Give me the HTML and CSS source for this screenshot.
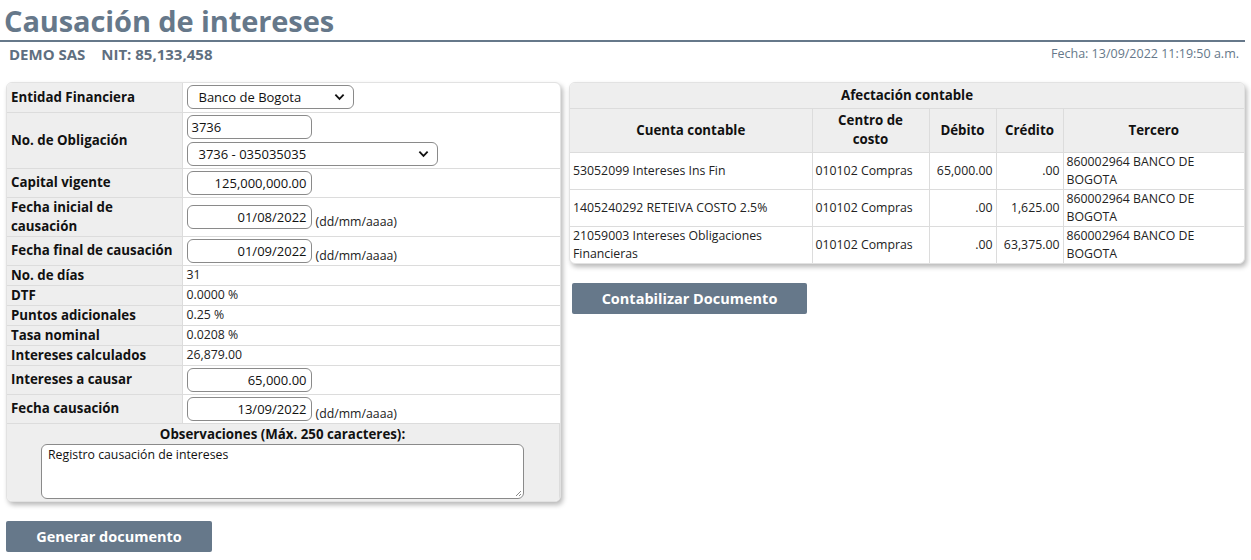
FILE: index.html
```html
<!DOCTYPE html>
<html lang="es">
<head>
<meta charset="utf-8">
<title>Causación de intereses</title>
<link rel="stylesheet" href="styles.css">
</head>
<body>
<header class="page-head">
  <h1 class="title">Causación de intereses</h1>
  <div class="subhead">
    <div class="company">DEMO SAS <span class="nit">NIT: 85,133,458</span></div>
    <div class="date">Fecha: 13/09/2022 11:19:50 a.m.</div>
  </div>
</header>

<main class="content">
  <section class="left">
    <div class="panel form-panel">
      <table class="form-table">
        <tr class="r-entidad">
          <th>Entidad Financiera</th>
          <td><div class="select w-bank"><span>Banco de Bogota</span><svg viewBox="0 0 12 8" class="chev"><path d="M1.5 1.5 6 6l4.5-4.5" /></svg></div></td>
        </tr>
        <tr class="r-oblig">
          <th>No. de Obligación</th>
          <td>
            <div class="input w-short left-al">3736</div>
            <div class="select w-long"><span>3736 - 035035035</span><svg viewBox="0 0 12 8" class="chev"><path d="M1.5 1.5 6 6l4.5-4.5" /></svg></div>
          </td>
        </tr>
        <tr class="r-input">
          <th>Capital vigente</th>
          <td><div class="input w-short">125,000,000.00</div></td>
        </tr>
        <tr class="r-date2">
          <th>Fecha inicial de causación</th>
          <td><div class="date-field"><div class="input w-short">01/08/2022</div><span class="hint">(dd/mm/aaaa)</span></div></td>
        </tr>
        <tr class="r-input">
          <th>Fecha final de causación</th>
          <td><div class="date-field"><div class="input w-short">01/09/2022</div><span class="hint">(dd/mm/aaaa)</span></div></td>
        </tr>
        <tr class="r-text"><th>No. de días</th><td>31</td></tr>
        <tr class="r-text"><th>DTF</th><td>0.0000 %</td></tr>
        <tr class="r-text"><th>Puntos adicionales</th><td>0.25 %</td></tr>
        <tr class="r-text"><th>Tasa nominal</th><td>0.0208 %</td></tr>
        <tr class="r-text"><th>Intereses calculados</th><td>26,879.00</td></tr>
        <tr class="r-input">
          <th>Intereses a causar</th>
          <td><div class="input w-short">65,000.00</div></td>
        </tr>
        <tr class="r-input">
          <th>Fecha causación</th>
          <td><div class="date-field"><div class="input w-short">13/09/2022</div><span class="hint">(dd/mm/aaaa)</span></div></td>
        </tr>
        <tr class="r-obs">
          <th colspan="2" class="obs-cell">
            <div class="obs-title">Observaciones (Máx. 250 caracteres):</div>
            <div class="textarea">Registro causación de intereses<svg class="grip" viewBox="0 0 8 8"><path d="M7 2 2 7M7 5 5 7"/></svg></div>
          </th>
        </tr>
      </table>
    </div>
    <button class="btn btn-gen" type="button">Generar documento</button>
  </section>

  <section class="right">
    <div class="panel acc-panel">
      <table class="acc-table">
        <tr class="acc-title"><th colspan="5">Afectación contable</th></tr>
        <tr class="acc-head">
          <th class="c-cuenta">Cuenta contable</th>
          <th class="c-centro">Centro de costo</th>
          <th class="c-deb">Débito</th>
          <th class="c-cred">Crédito</th>
          <th class="c-terc">Tercero</th>
        </tr>
        <tr>
          <td>53052099 Intereses Ins Fin</td>
          <td>010102 Compras</td>
          <td class="num">65,000.00</td>
          <td class="num">.00</td>
          <td>860002964 BANCO DE BOGOTA</td>
        </tr>
        <tr>
          <td>1405240292 RETEIVA COSTO 2.5%</td>
          <td>010102 Compras</td>
          <td class="num">.00</td>
          <td class="num">1,625.00</td>
          <td>860002964 BANCO DE BOGOTA</td>
        </tr>
        <tr>
          <td>21059003 Intereses Obligaciones Financieras</td>
          <td>010102 Compras</td>
          <td class="num">.00</td>
          <td class="num">63,375.00</td>
          <td>860002964 BANCO DE BOGOTA</td>
        </tr>
      </table>
    </div>
    <button class="btn btn-cont" type="button">Contabilizar Documento</button>
  </section>
</main>
</body>
</html>
```

FILE: styles.css
```css
* { box-sizing: border-box; }
html, body { margin: 0; padding: 0; background: #fff; }
body {
  font-family: "Open Sans", "Noto Sans", "Liberation Sans", sans-serif;
  font-size: 12px;
  color: #222;
}

.page-head { padding: 0 6px 0 0; }
.title {
  margin: 0;
  padding: 1px 0 0 4px;
  font-size: 29px;
  line-height: 39px;
  font-weight: 700;
  color: #66788a;
  border-bottom: 2px solid #66788a;
  letter-spacing: -0.1px;
}
.subhead {
  display: flex;
  justify-content: space-between;
  align-items: flex-start;
  padding: 1px 6px 0 9px;
  height: 40px;
}
.company {
  font-weight: 700;
  font-size: 15px;
  line-height: 22px;
  color: #5f6f80;
}
.nit { margin-left: 12px; }
.date {
  font-size: 12.5px;
  line-height: 20px;
  color: #66788a;
  padding-top: 1px;
}

.content {
  display: flex;
  align-items: flex-start;
  gap: 8px;
  padding-left: 6px;
}

.panel {
  border-radius: 6px;
  background: #fff;
  box-shadow: 2px 3px 5px rgba(0,0,0,0.28);
  overflow: hidden;
  border: 1px solid #e2e2e2;
}

/* ---------- left form ---------- */
.left { width: 555px; }
.form-table {
  width: 100%;
  border-collapse: collapse;
}
.form-table th, .form-table td {
  border-bottom: 1px solid #dcdcdc;
  padding: 0 4px;
  vertical-align: middle;
}
.form-table th {
  width: 175px;
  background: #eee;
  text-align: left;
  font-weight: 700;
  font-size: 13.3px;
  line-height: 19px;
  color: #111;
  padding-left: 4px;
  border-right: 1px solid #dcdcdc;
}
.form-table td {
  font-size: 12.3px;
  color: #222;
  padding-left: 4px;
}
.r-entidad th, .r-entidad td { height: 29px; }
.r-oblig th, .r-oblig td { height: 56px; }
.r-input th, .r-input td { height: 29px; }
.r-date2 th, .r-date2 td { height: 39px; }
.r-text th, .r-text td { height: 20px; line-height: 18px; }
.r-obs th { border-bottom: none; }

.input, .select {
  height: 24px;
  border: 1px solid #8a8a8a;
  border-radius: 6px;
  background: #fff;
  font-size: 13px;
  line-height: 22px;
  color: #111;
  font-weight: 400;
}
.input { text-align: right; padding: 0 4px; }
.input.left-al { text-align: left; }
.w-short { width: 125px; }
.w-bank { width: 167px; }
.w-long { width: 251px; margin-top: 3px; }
.select {
  display: flex;
  align-items: center;
  justify-content: space-between;
  padding: 0 8px 0 11px;
}
.chev { width: 11px; height: 8px; fill: none; stroke: #111; stroke-width: 2; }

.date-field { display: flex; align-items: flex-end; gap: 4px; }
.hint { font-size: 12.3px; line-height: 14px; color: #222; }

.obs-cell {
  text-align: center !important;
  padding: 0 35px 2px 34px !important;
}
.obs-title {
  font-size: 13.3px;
  line-height: 20px;
  color: #111;
}
.textarea {
  position: relative;
  height: 55px;
  border: 1px solid #8a8a8a;
  border-radius: 6px;
  background: #fff;
  text-align: left;
  font-weight: 400;
  font-size: 12.3px;
  line-height: 16px;
  padding: 2px 6px;
  color: #111;
}
.grip {
  position: absolute;
  right: 1px; bottom: 1px;
  width: 8px; height: 8px;
  fill: none; stroke: #888; stroke-width: 1;
}

.btn {
  display: block;
  border: none;
  border-radius: 2px;
  background: #66788a;
  color: #fff;
  font-family: "Open Sans", "Noto Sans", sans-serif;
  font-weight: 700;
  font-size: 14.5px;
  height: 31px;
  padding: 0;
}
.btn-gen { width: 206px; margin-top: 19px; }
.btn-cont { width: 235px; margin-top: 19px; margin-left: 3px; }

/* ---------- right table ---------- */
.right { width: 676px; }
.acc-table {
  width: 100%;
  border-collapse: collapse;
  font-size: 12.3px;
}
.acc-table th {
  background: #eee;
  font-weight: 700;
  color: #111;
  font-size: 13.3px;
  line-height: 19px;
  text-align: center;
  padding: 0 8px;
}
.acc-title th { height: 25px; border-bottom: 1px solid #dcdcdc; }
.acc-head th { height: 44px; border-bottom: 1px solid #dcdcdc; border-right: 1px solid #dcdcdc; }
.acc-head th:last-child, .acc-table td:last-child { border-right: none; }
.acc-table td {
  height: 37px;
  line-height: 18px;
  padding: 0 3px;
  border-bottom: 1px solid #dcdcdc;
  border-right: 1px solid #dcdcdc;
  color: #222;
}
.acc-table tr:last-child td { border-bottom: none; }
.acc-table td.num { text-align: right; }
.c-cuenta { width: 242px; }
.c-centro { width: 117px; }
.c-deb { width: 67px; }
.c-cred { width: 67px; }
.c-terc { width: auto; }
```
